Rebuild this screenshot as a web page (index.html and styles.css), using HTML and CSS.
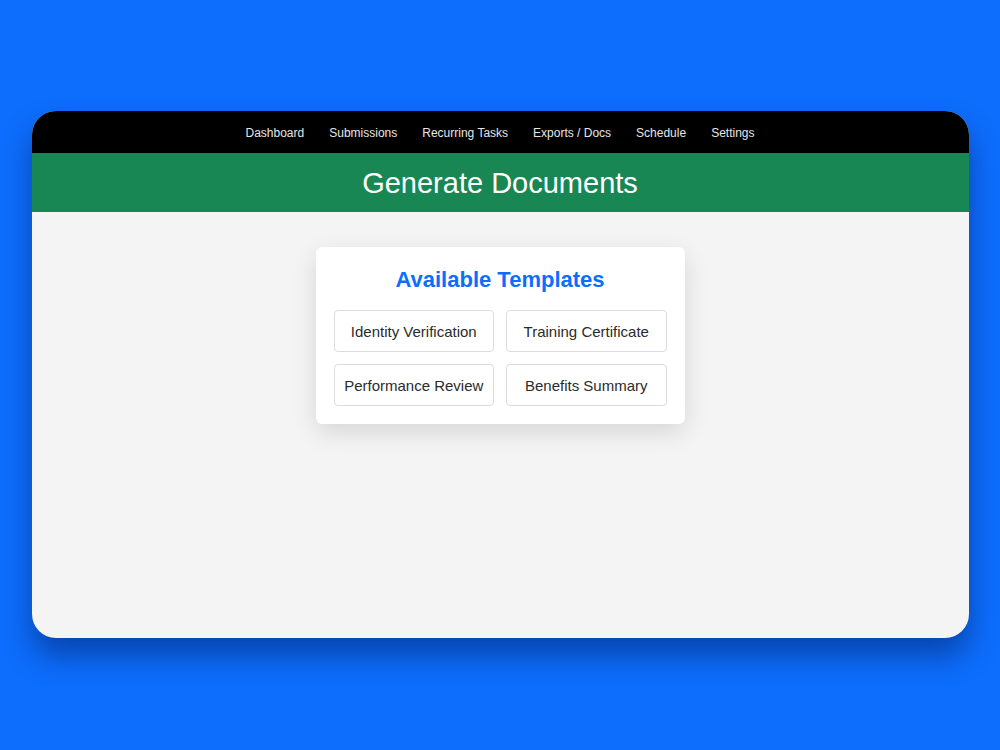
FILE: index.html
```html
<!DOCTYPE html>
<html lang="en">

<head>
    <meta charset="UTF-8">
    <meta name="viewport" content="width=device-width, initial-scale=1.0">
    <title>Generate Documents</title>
    <link rel="stylesheet" href="styles.css">
</head>

<body>
    <div class="window">
        <nav class="topnav">
            <a href="#">Dashboard</a>
            <a href="#">Submissions</a>
            <a href="#">Recurring Tasks</a>
            <a href="#">Exports / Docs</a>
            <a href="#">Schedule</a>
            <a href="#">Settings</a>
        </nav>

        <header class="page-header">
            <h1>Generate Documents</h1>
        </header>

        <main class="content">
            <div class="template-card">
                <h2>Available Templates</h2>
                <div class="template-grid">
                    <button class="template-btn">Identity Verification</button>
                    <button class="template-btn">Training Certificate</button>
                    <button class="template-btn">Performance Review</button>
                    <button class="template-btn">Benefits Summary</button>
                </div>
            </div>
        </main>
    </div>
</body>

</html>
```

FILE: styles.css
```css
html,
body {
    height: 100%;
}

body {
    margin: 0;
    font-family: 'Liberation Sans', Arial, sans-serif;
    background: #0d6efd;
    display: flex;
    justify-content: center;
    align-items: flex-start;
    padding-top: 111px;
    box-sizing: border-box;
}

.window {
    width: 937px;
    height: 527px;
    border-radius: 24px;
    overflow: hidden;
    background: #f4f4f4;
    display: flex;
    flex-direction: column;
    box-shadow: 0 18px 30px rgba(0, 20, 80, 0.45);
}

.topnav {
    background: #000;
    height: 42px;
    box-sizing: border-box;
    padding-top: 2px;
    display: flex;
    justify-content: center;
    align-items: center;
    gap: 25px;
}

.topnav a {
    color: #e6e6e6;
    text-decoration: none;
    font-size: 12px;
}

.page-header {
    background: #198754;
    height: 59px;
    box-sizing: border-box;
    padding-top: 2px;
    display: flex;
    justify-content: center;
    align-items: center;
}

.page-header h1 {
    margin: 0;
    color: #fff;
    font-weight: normal;
    font-size: 29px;
}

.content {
    flex: 1;
    display: flex;
    justify-content: center;
    align-items: flex-start;
    padding-top: 35px;
}

.template-card {
    width: 369px;
    box-sizing: border-box;
    background: #fff;
    border-radius: 6px;
    padding: 19px 18px 18px;
    box-shadow: 0 8px 24px rgba(0, 0, 0, 0.12);
}

.template-card h2 {
    margin: 0 0 17px;
    text-align: center;
    color: #0d6efd;
    font-size: 22px;
    line-height: 27px;
}

.template-grid {
    display: grid;
    grid-template-columns: 1fr 1fr;
    gap: 12px;
}

.template-btn {
    height: 42px;
    background: #fff;
    border: 1px solid #dcdcdc;
    border-radius: 4px;
    font-family: 'Liberation Sans', Arial, sans-serif;
    font-size: 15px;
    color: #2b2b2b;
    cursor: pointer;
}
```
